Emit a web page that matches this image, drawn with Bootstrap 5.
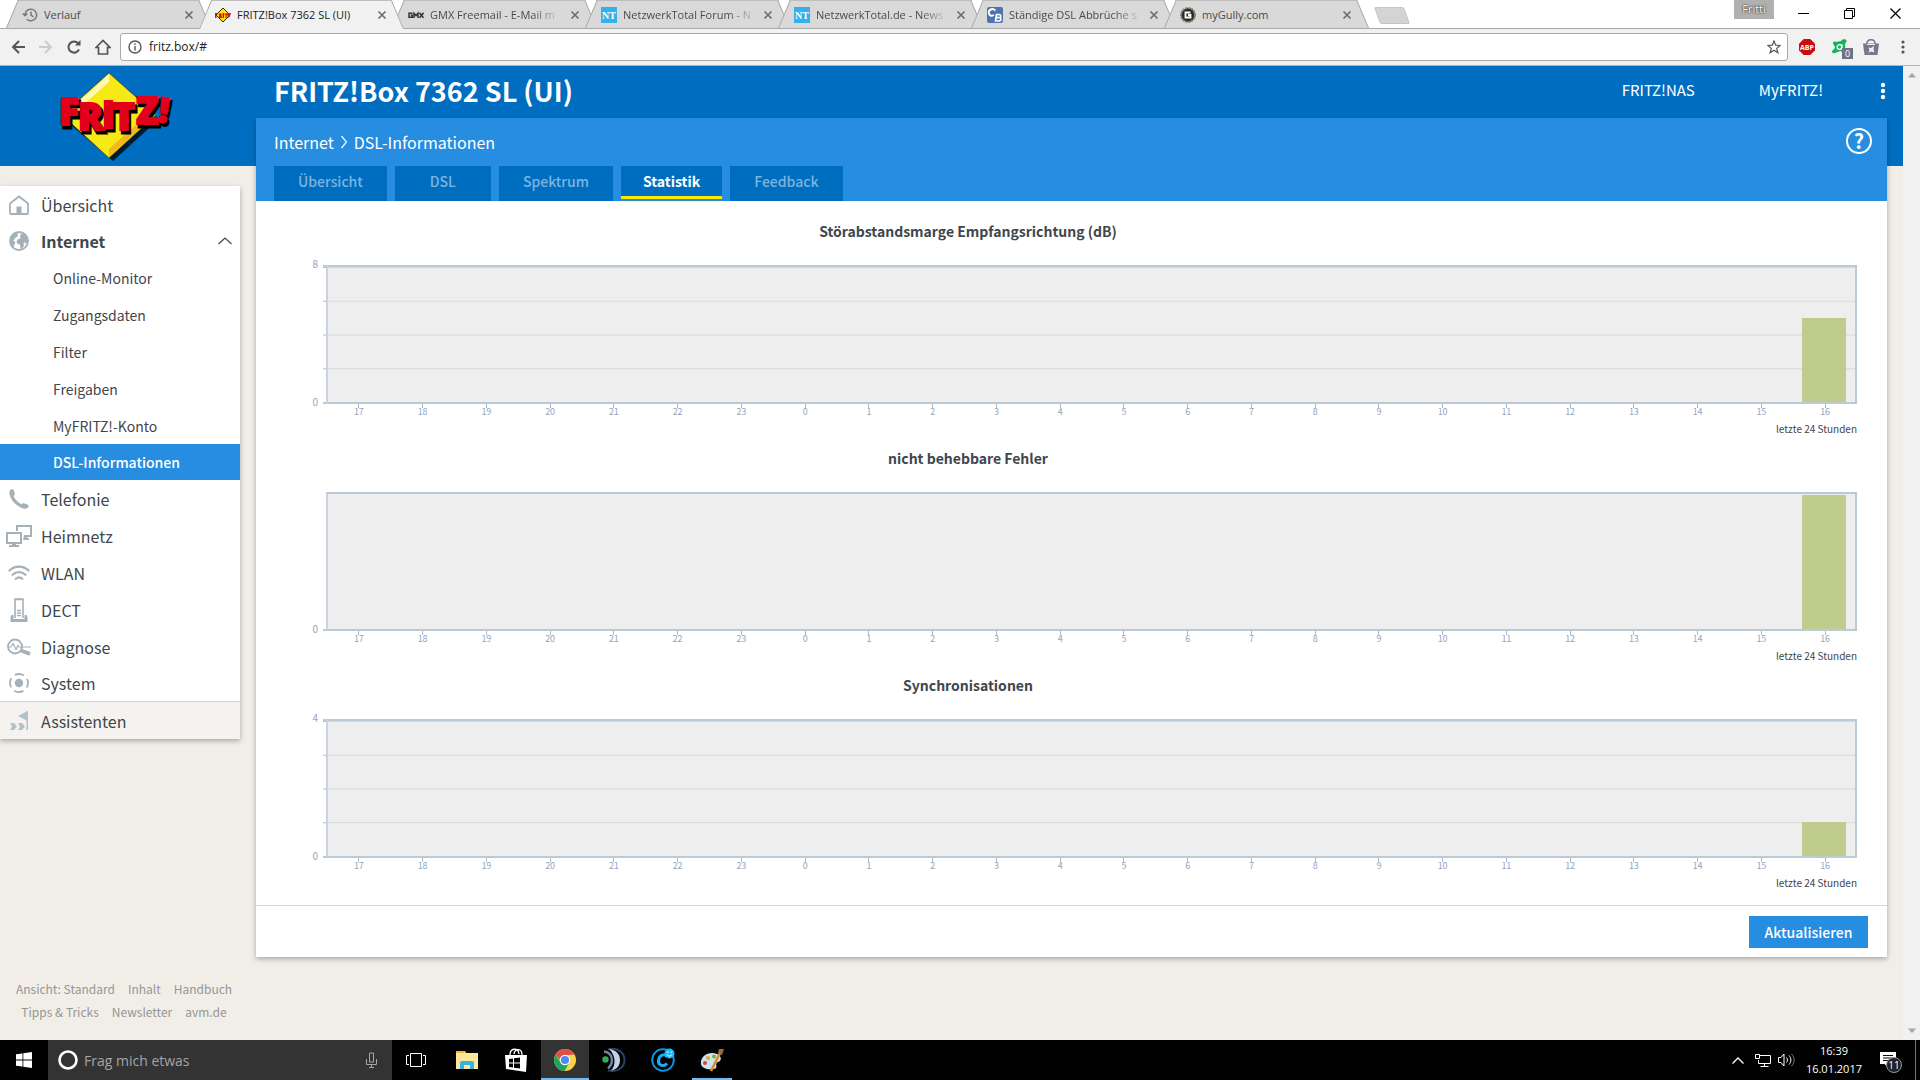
<!DOCTYPE html>
<html lang="de">
<head>
<meta charset="utf-8">
<meta name="viewport" content="width=device-width, initial-scale=1">
<title>FRITZ!Box 7362 SL (UI)</title>
<link href="https://cdn.jsdelivr.net/npm/bootstrap@5.3.0/dist/css/bootstrap.min.css" rel="stylesheet">
<style>
:root { --fb-dark:#006ec0; --fb-light:#268de0; --fb-ink:#3f464c; --fb-icon:#a5b1b9; --ui:"Open Sans","Noto Sans",sans-serif; }
body { font-family:"Noto Sans CJK SC","Source Sans Pro",sans-serif; color:var(--fb-ink); background:#f1eee7; }
a { text-decoration:none; color:inherit; }
button { border:0; background:none; padding:0; color:inherit; }
svg { display:block; flex:none; }

/* browser window */
.browser { font-family:var(--ui); font-size:12px; background:#f1f1f1; }
.tabstrip { height:29px; background:#fff; padding-left:6px; border-bottom:1px solid #a9a9a9; }
.btab { position:relative; width:205px; height:28px; margin-right:-12px; padding:1px 17px 0 16px; gap:6px; color:#4b4b4b; font-size:11px; line-height:28px; }
.btab::before, .btab::after { content:""; position:absolute; top:0; bottom:0; width:52%; background:#d9d9d9; border-top:1px solid #bdbdbd; }
.btab::before { left:0; transform:skewX(-23deg); transform-origin:left bottom; border-left:1px solid #a9a9a9; }
.btab::after { right:0; transform:skewX(23deg); transform-origin:right bottom; border-right:1px solid #a9a9a9; }
.btab > * { position:relative; z-index:1; }
.btab.current { z-index:3; height:29px; color:#222; }
.btab.current::before, .btab.current::after { background:#f1f1f1; }
.btab-title { white-space:nowrap; }
.btab-title.fades { -webkit-mask-image:linear-gradient(90deg,#000 82%,rgba(0,0,0,.2)); }
.new-tab { width:30px; height:17px; margin:7px 0 0 20px; background:#d4d4d4; border:1px solid #c4c4c4; border-radius:2px; transform:skewX(20deg); }
.user-chip { width:40px; height:19px; background:#b0b0b0; color:#fff; font-size:11px; line-height:18px; text-shadow:0 0 2px #222,0 0 1px #222; }
.winbtns { gap:35px; padding:8px 19px 0 24px; }
.toolbar { height:36px; padding:0 13px 0 11px; gap:14px; }
.omnibox { height:28px; border:1px solid #a9a9a9; border-radius:3px; background:#fff; padding:0 6px 0 7px; gap:7px; margin:0 -3px 0 -5px; }
.omnibox input { border:0; outline:0; padding:0; font-size:12px; color:#222; background:none; }
.browser-edge { height:1px; background:#b3b3b3; }
.ext-badge { position:absolute; left:11px; top:9px; width:11px; height:11px; background:#6f7285; color:#fff; font-size:9px; line-height:11px; text-align:center; }

/* router page */
.fb-page { background:linear-gradient(var(--fb-dark) 100px,#f1eee7 100px); }
.fb-left { width:248px; }
.fb-logo { height:120px; padding:6px 0 0 58px; }
.fb-menu { width:240px; background:#fff; box-shadow:0 2px 5px rgba(0,0,0,.3); font-size:16px; }
.fb-menu a { display:flex; align-items:center; height:37px; line-height:24px; }
.fb-menu .ico { width:38px; margin-right:3px; display:flex; justify-content:center; color:var(--fb-icon); }
.fb-menu .group { height:36px; }
.fb-menu .sub { font-size:14px; padding-left:53px; }
.fb-menu .sub.here { background:var(--fb-light); color:#fff; font-weight:500; height:36px; }
.fb-menu .wizard { background:#f5f3ef; border-top:1px solid #cfd1d2; height:38px; }
.fb-links { color:#969694; font-size:12px; line-height:23px; padding:0 0 17px 0; }
.fb-links div { gap:13px; }
.fb-top { height:52px; color:#fff; padding:0 0 3px 18px; }
.fb-title { font-size:27px; font-weight:700; line-height:36px; margin:0; }
.fb-nav { font-size:15px; gap:56px; }
.fb-panel { background:#fff; margin-right:16px; box-shadow:0 2px 5px rgba(0,0,0,.3); }
.fb-head { background:var(--fb-light); height:83px; color:#fff; padding:0 18px; }
.crumbs { font-size:16px; line-height:24px; padding-top:12px; gap:7px; }
.help { width:26px; height:26px; border:2px solid #fff; border-radius:50%; font-size:20px; font-weight:700; line-height:20px; margin:10px -3px 0 0; }
.fb-tabs { gap:8px; }
.fb-tabs a { background:var(--fb-dark); color:#7db4de; font-size:14px; font-weight:500; line-height:30px; height:35px; padding:0 24px; min-width:96px; text-align:center; }
.fb-tabs a.here { color:#fff; font-weight:700; height:33px; padding:0 22px; border-bottom:3px solid #ffe600; }
.charts { padding:18px 30px 5px 0; }
.chart { margin:0 0 8px; }
.chart-title { font-size:14px; font-weight:700; line-height:24px; margin:0 177px 22px 0; text-align:center; color:#3f464c; }
.y-labels { width:62px; margin:-7px 5px -4px 0; font-size:10px; line-height:12px; color:#93a5bc; text-align:right; }
.ticks { width:3px; }
.plot, .ticks { height:139px; border:solid #bccad6; border-width:2px 0; }
.plot { border-width:2px; border-left-color:#c9d4de; background-color:#eee; padding-right:9px; }
.lined { background-image:linear-gradient(#d0dae3 1px,transparent 1px); background-size:100% 25%; }
.ticks.lined { background-image:linear-gradient(#aebdcb 1px,transparent 1px); }
.ticks.single { border-top-color:transparent; }
.bar { width:44px; background:#c0cb8e; }
.x-labels { margin-left:71px; font-size:9px; line-height:16px; color:#93a5bc; }
.x-labels span { flex:1 1 0; text-align:center; background:linear-gradient(#a9b9c9,#a9b9c9) center top/1px 4px no-repeat; }
.chart-note { font-size:10px; line-height:18px; text-align:right; }
.fb-actions { border-top:1px solid #d3d5d6; padding:10px 19px 9px; }
.fb-btn { background:var(--fb-light); color:#fff; font-size:14px; font-weight:500; width:119px; height:32px; line-height:32px; border-radius:0; }
.scroller { width:17px; background:#f1f1f1; padding:7px 0; }

/* taskbar */
.taskbar { height:40px; background:#020203; color:#fff; font-family:var(--ui); }
.tb { width:48px; height:40px; display:flex; align-items:center; justify-content:center; }
.tb.live { background:#333; }
.tb.live, .tb.open { box-shadow:inset 0 -2px #76b9ed; }
.tb.open { width:40px; margin:0 4px; }
.cortana { width:344px; background:#333; padding:0 15px 0 10px; gap:6px; }
.cortana input { background:none; border:0; outline:0; padding:0; color:#a5a5a5; font-size:14px; }
.cortana input::placeholder { color:#a5a5a5; opacity:1; }
.apps { gap:1px; margin-left:3px; }
.tray { gap:7px; font-size:11px; line-height:18px; }
.news { position:relative; margin-left:11px; }
.news-count { position:absolute; left:6px; top:5px; width:16px; height:16px; border-radius:50%; background:#222; border:1px solid #999; font-size:10px; line-height:14px; text-align:center; }
.peek { width:1px; height:40px; background:#777; margin:0 4px 0 12px; }
</style>
<script src="https://cdn.jsdelivr.net/npm/bootstrap@5.3.0/dist/js/bootstrap.bundle.min.js"></script>
</head>
<body class="d-flex flex-column min-vh-100">

<svg width="0" height="0" class="position-absolute" aria-hidden="true">
  <symbol id="x" viewBox="0 0 10 10"><path d="M1.500 1.500l7 7m0-7l-7 7" stroke="#6a6a6a" stroke-width="1.600"/></symbol>
</svg>

<header class="browser">
  <div class="tabstrip d-flex align-items-start">
    <div class="btab d-flex align-items-center">
      <svg width="16" height="16" viewBox="0 0 16 16" fill="none" stroke="#777" stroke-width="1.500"><path d="M3 8a5.800 5.800 0 1 1 1.800 4.200M.8 6.500L3 8.800l2.300-2.300M9 4.500V8l2.500 1.800"/></svg>
      <span class="btab-title">Verlauf</span>
      <button type="button" class="ms-auto" aria-label="Tab schließen"><svg width="10" height="10"><use href="#x"/></svg></button>
    </div>
    <div class="btab current d-flex align-items-center">
      <svg width="16" height="16" viewBox="0 0 16 16"><path d="M8 1l7 7-7 7-7-7z" fill="#ffe800" stroke="#332b00"/><path d="M0 6h3v1.500H1.500V11H0zM4 6.500h2.500v2L7 11H4zM7.500 6H9v5H7.500zM9.500 6.500h3V8h-.8v3h-1.200V8h-1zM12.500 6H16l-1.500 4.500h-2z" fill="#d8101c"/></svg>
      <span class="btab-title">FRITZ!Box 7362 SL (UI)</span>
      <button type="button" class="ms-auto" aria-label="Tab schließen"><svg width="10" height="10"><use href="#x"/></svg></button>
    </div>
    <div class="btab d-flex align-items-center">
      <svg width="16" height="16" viewBox="0 0 16 16" fill="none" stroke="#333" stroke-width="1.500"><path d="M4.500 6.200H1v4h3.300V8.300H2.800M6 11V6.200l2 2.300 2-2.300V11M11.500 5.800l4 5M15.500 5.800l-4 5"/></svg>
      <span class="btab-title fades">GMX Freemail - E-Mail m</span>
      <button type="button" class="ms-auto" aria-label="Tab schließen"><svg width="10" height="10"><use href="#x"/></svg></button>
    </div>
    <div class="btab d-flex align-items-center">
      <svg width="16" height="16" viewBox="0 0 16 16"><path d="M0 0h16v16H0z" fill="#36b0ea"/><text x="8" y="12" font-size="10" font-weight="700" font-family="Liberation Serif,serif" fill="#fff" text-anchor="middle">NT</text></svg>
      <span class="btab-title fades">NetzwerkTotal Forum - N</span>
      <button type="button" class="ms-auto" aria-label="Tab schließen"><svg width="10" height="10"><use href="#x"/></svg></button>
    </div>
    <div class="btab d-flex align-items-center">
      <svg width="16" height="16" viewBox="0 0 16 16"><path d="M0 0h16v16H0z" fill="#36b0ea"/><text x="8" y="12" font-size="10" font-weight="700" font-family="Liberation Serif,serif" fill="#fff" text-anchor="middle">NT</text></svg>
      <span class="btab-title fades">NetzwerkTotal.de - News</span>
      <button type="button" class="ms-auto" aria-label="Tab schließen"><svg width="10" height="10"><use href="#x"/></svg></button>
    </div>
    <div class="btab d-flex align-items-center">
      <svg width="16" height="16" viewBox="0 0 16 16"><rect width="16" height="16" rx="2" fill="#4d74b0"/><path d="M8.500 3.500C5 .5 1.500 3 1.800 6c.2 2.500 2.500 3.500 5 2" fill="none" stroke="#fff" stroke-width="2"/><path d="M9.500 7.500l-1 6.500h3c3 0 3-3.200.8-3.400 2.200-.4 2-3.100-.3-3.100zM9 10.600h3" fill="none" stroke="#fff" stroke-width="1.700"/></svg>
      <span class="btab-title fades">Ständige DSL Abbrüche s</span>
      <button type="button" class="ms-auto" aria-label="Tab schließen"><svg width="10" height="10"><use href="#x"/></svg></button>
    </div>
    <div class="btab d-flex align-items-center">
      <svg width="16" height="16" viewBox="0 0 16 16"><circle cx="8" cy="8" r="7" fill="#2b2b27" stroke="#8b8170" stroke-width="2" stroke-dasharray="2 1"/><path d="M10.500 5.500h-5v5h5V8H8" fill="none" stroke="#fff" stroke-width="1.800"/></svg>
      <span class="btab-title">myGully.com</span>
      <button type="button" class="ms-auto" aria-label="Tab schließen"><svg width="10" height="10"><use href="#x"/></svg></button>
    </div>
    <button type="button" class="new-tab" aria-label="Neuer Tab"></button>
    <div class="ms-auto d-flex">
      <div class="user-chip text-center">Fritti</div>
      <div class="winbtns d-flex">
        <button type="button" aria-label="Minimieren"><svg width="11" height="11" stroke="#000"><path d="M0 5.500h11"/></svg></button>
        <button type="button" aria-label="Wiederherstellen"><svg width="11" height="11" fill="none" stroke="#000"><path d="M.5 2.500h8v8h-8zM2.500 2.500v-2h8v8h-2"/></svg></button>
        <button type="button" aria-label="Schließen"><svg width="11" height="11" stroke="#000" stroke-width="1.200"><path d="M.5.5l10 10m0-10l-10 10"/></svg></button>
      </div>
    </div>
  </div>
  <div class="toolbar d-flex align-items-center">
    <button type="button" aria-label="Zurück"><svg width="14" height="14" fill="none" stroke="#555" stroke-width="2"><path d="M14 7H2m6-6L2 7l6 6"/></svg></button>
    <button type="button" aria-label="Vor"><svg width="14" height="14" fill="none" stroke="#ccc" stroke-width="2"><path d="M0 7h12M6 1l6 6-6 6"/></svg></button>
    <button type="button" aria-label="Neu laden"><svg width="14" height="14" fill="none" stroke="#555" stroke-width="2"><path d="M12 9.500a5.500 5.500 0 1 1-.8-6"/><path d="M13.500 0v5.500H8z" fill="#555" stroke="none"/></svg></button>
    <button type="button" aria-label="Startseite"><svg width="16" height="16" fill="none" stroke="#555" stroke-width="1.700"><path d="M1 8.500L8 1.500l7 7h-2.500V15h-9V8.500z"/></svg></button>
    <div class="omnibox d-flex align-items-center flex-fill">
      <svg width="14" height="14" fill="none" stroke="#555" stroke-width="1.400"><circle cx="7" cy="7" r="6"/><path d="M7 6v4.500M7 3.300v1.500"/></svg>
      <input class="flex-fill" type="text" aria-label="Adresse" value="fritz.box/#">
      <svg width="14" height="14" viewBox="0 0 14 14" fill="none" stroke="#555" stroke-width="1.200"><path d="M7 1l1.700 4.200 4.500.3-3.500 2.900 1.200 4.400L7 10.300l-3.900 2.500 1.200-4.400L.8 5.500l4.500-.3z"/></svg>
    </div>
    <div class="d-flex align-items-center gap-3">
      <svg width="16" height="16"><path d="M4.700 0h6.600L16 4.700v6.600L11.300 16H4.700L0 11.300V4.700z" fill="#c90c0f"/><text x="8" y="11" font-size="7" font-weight="700" font-family="Open Sans,sans-serif" fill="#fff" text-anchor="middle">ABP</text></svg>
      <div class="position-relative"><svg width="16" height="16"><path d="M2 4c0-1.500 2-2 3.500-1L10 2c1-2 5-2.500 5.500-.5.500 1.500-1 2.500-1.500 3.500l.5 8c-1.500 1.500-3.500 0-5-1L4 14c-2 .8-4-.5-2.500-2.500L4 9c0-2-2-3.500-2-5z" fill="#12b457"/><circle cx="8.500" cy="8" r="2.300" fill="none" stroke="#fff" stroke-width="1.300"/><path d="M11 5v6" stroke="#fff"/></svg><span class="ext-badge">0</span></div>
      <svg width="16" height="16"><path d="M0 4.500h16L14.500 16h-13z" fill="#75798a"/><path d="M4 6V4a4 3.300 0 0 1 8 0v2" fill="none" stroke="#75798a" stroke-width="1.500"/><path d="M4 5.500h8" stroke="#f1f1f1"/><path d="M5.500 8.500l2.500.5 3-2-.5 3 .8 3.500-2.800-1-3 1 1-2.500z" fill="#f1f1f1"/></svg>
      <button type="button" aria-label="Menü" class="ms-1"><svg width="8" height="16" fill="#555"><circle cx="4" cy="3" r="1.600"/><circle cx="4" cy="8" r="1.600"/><circle cx="4" cy="13" r="1.600"/></svg></button>
    </div>
  </div>
  <div class="browser-edge"></div>
</header>

<div class="d-flex flex-fill">
  <div class="fb-page d-flex flex-fill">
    <aside class="fb-left d-flex flex-column flex-shrink-0">
      <a class="fb-logo" href="#" aria-label="FRITZ!">
        <svg width="116" height="90" viewBox="0 0 116 90">
          <path d="M53 5l48 42-46 42L6 47z" fill="#000" opacity=".75"/>
          <path d="M51 1l47 42-47 43L4 43z" fill="#f7ea14" stroke="#3a3600" stroke-width=".6"/>
          <path d="M51 2v8L14 43H6z" fill="#fffab0"/><path d="M51 85v-8l38-34h8z" fill="#f2b71b"/>
          <g font-family="Open Sans,sans-serif" font-weight="800" font-size="37">
            <g fill="#000" stroke="#000" stroke-width="3"><text x="3" y="56">F</text><text x="22" y="61">R</text><text x="46" y="59">I</text><text x="57" y="61">T</text><text x="80" y="55">Z</text><text x="103" y="53" font-size="34" transform="rotate(8 108 40)">!</text></g>
            <g fill="#e2001a" stroke="#e2001a" stroke-width="2"><text x="1" y="53">F</text><text x="20" y="58">R</text><text x="44" y="56">I</text><text x="55" y="58">T</text><text x="78" y="52">Z</text><text x="101" y="50" font-size="34" transform="rotate(8 106 38)">!</text></g>
          </g>
        </svg>
      </a>
      <nav class="fb-menu">
        <a href="#"><span class="ico"><svg width="20" height="20" viewBox="0 0 20 20" fill="none" stroke="currentColor" stroke-width="1.800"><path d="M1 8.500L10 1.500l9 7V18a1 1 0 0 1-1 1H2a1 1 0 0 1-1-1z"/><path d="M7.500 11.500h5V19h-5z" fill="currentColor" stroke="none"/></svg></span>Übersicht</a>
        <a href="#" class="group fw-bold"><span class="ico"><svg width="20" height="20" viewBox="0 0 20 20" fill="currentColor"><circle cx="10" cy="10" r="9" fill="none" stroke="currentColor" stroke-width="1.800"/><path d="M1.500 7l3-4 3-1.500 2 1L8 4l1.500.5L7 6.500 5 8l.5 1L4 9.500 6.500 11l-1 2.500-.8 3L2 13z"/><path d="M11.500 3.500l2.500-2 4 4L19 10l-2.500 3-1-2-1 1.500.5 2-2 3.500-1.500-.5-.5-4-2.500-.5-1-2.500L9 8l2.500-.5-.5-2z"/></svg></span>Internet
          <svg class="ms-auto me-2" width="14" height="8" fill="none" stroke="#3f464c" stroke-width="1.200"><path d="M.5 7L7 1l6.500 6"/></svg></a>
        <a href="#" class="sub">Online-Monitor</a>
        <a href="#" class="sub">Zugangsdaten</a>
        <a href="#" class="sub">Filter</a>
        <a href="#" class="sub">Freigaben</a>
        <a href="#" class="sub">MyFRITZ!-Konto</a>
        <a href="#" class="sub here">DSL-Informationen</a>
        <a href="#"><span class="ico"><svg width="20" height="20" viewBox="0 0 20 20" fill="currentColor"><path d="M1 1c2-1.500 3.500-.8 4 .8l.8 3C6 6 5.500 6.300 4.500 7c1.500 3.500 4.500 6.500 8 8.300.8-1 1.300-1.300 2.500-1l3.500 1.200c1.500.8 1.500 2 .3 3.300-1.600 1.500-4.300 1.200-7-.3C6.300 15.700 2.600 11.700 1 7 .3 4.500 0 2.300 1 1z"/></svg></span>Telefonie</a>
        <a href="#"><span class="ico"><svg width="26" height="22" viewBox="0 0 26 22" fill="none" stroke="currentColor" stroke-width="2"><path d="M11 6V1h14v10h-7"/><path d="M1 8h14v10H1z"/><path d="M6 18h4v2h3v2H3v-2h3zM18 11h3v2h2v2h-6z" fill="currentColor" stroke="none"/></svg></span>Heimnetz</a>
        <a href="#"><span class="ico"><svg width="22" height="16" viewBox="0 0 22 16" fill="none" stroke="currentColor" stroke-width="2.200" stroke-linecap="round"><path d="M1.500 5.500c5-5.300 14-5.300 19 0M4.500 9.800c4-3.700 9-3.700 13 0M7.800 13.800c2-1.800 4.400-1.800 6.400 0"/></svg></span>WLAN</a>
        <a href="#"><span class="ico"><svg width="18" height="24" viewBox="0 0 18 24" fill="none" stroke="currentColor" stroke-width="1.600"><path d="M5 20V1h8v19M5 1.500h8M7 12.500h4M7 15h4M7 17.500h4"/><path d="M.5 24v-5l1-2h2v4h11v-4h2l1 2v5z" fill="currentColor" stroke="none"/></svg></span>DECT</a>
        <a href="#"><span class="ico"><svg width="24" height="18" viewBox="0 0 24 18" fill="none" stroke="currentColor" stroke-width="1.800"><circle cx="8" cy="8.500" r="7"/><path d="M1 9h3l2-3.500 3 6 2-4 1 1.500h3" stroke-width="1.200"/><path d="M15 9h9" stroke-width="1"/><path d="M14 12.500l9 3.500" stroke-width="3.500"/></svg></span>Diagnose</a>
        <a href="#" class="group"><span class="ico"><svg width="20" height="20" viewBox="0 0 20 20"><circle cx="10" cy="10" r="9" fill="none" stroke="currentColor" stroke-width="1.800" stroke-dasharray="9.500 4.640" stroke-dashoffset="4.700"/><circle cx="10" cy="10" r="4.200" fill="currentColor"/></svg></span>System</a>
        <a href="#" class="wizard"><span class="ico"><svg width="20" height="19" viewBox="0 0 20 19" fill="#b3c1c8"><path d="M17.500 0H19v19h-1.500zM9 5l8.500-4.500v9zM1 12h4l3 3.500L5 19H1l2-3.500zM9 12h4l3 3.500-3 3.500H9l2-3.500z"/></svg></span>Assistenten</a>
      </nav>
      <footer class="fb-links mt-auto">
        <div class="d-flex justify-content-center"><a href="#">Ansicht: Standard</a><a href="#">Inhalt</a><a href="#">Handbuch</a></div>
        <div class="d-flex justify-content-center"><a href="#">Tipps &amp; Tricks</a><a href="#">Newsletter</a><a href="#">avm.de</a></div>
      </footer>
    </aside>

    <div class="flex-fill ms-2">
      <div class="fb-top d-flex align-items-center justify-content-between">
        <h1 class="fb-title">FRITZ!Box 7362 SL (UI)</h1>
        <nav class="fb-nav d-flex align-items-center me-3">
          <a href="#" class="me-2">FRITZ!NAS</a><a href="#">MyFRITZ!</a>
          <button type="button" aria-label="Weitere Optionen"><svg width="8" height="18" fill="#fff"><circle cx="4" cy="3" r="2.200"/><circle cx="4" cy="9" r="2.200"/><circle cx="4" cy="15" r="2.200"/></svg></button>
        </nav>
      </div>
      <main class="fb-panel">
        <div class="fb-head d-flex flex-column justify-content-between">
          <div class="d-flex justify-content-between align-items-start">
            <div class="crumbs d-flex align-items-center"><a href="#">Internet</a><svg width="6" height="14" fill="none" stroke="#fff" stroke-width="1.200"><path d="M.5 1l5 6-5 6"/></svg><span>DSL-Informationen</span></div>
            <button type="button" class="help" aria-label="Hilfe">?</button>
          </div>
          <nav class="fb-tabs d-flex align-items-start">
            <a href="#">Übersicht</a><a href="#">DSL</a><a href="#">Spektrum</a><a href="#" class="here">Statistik</a><a href="#">Feedback</a>
          </nav>
        </div>
        <div class="charts">
          <figure class="chart">
            <h2 class="chart-title">Störabstandsmarge Empfangsrichtung (dB)</h2>
            <div class="d-flex">
              <div class="y-labels d-flex flex-column justify-content-between"><span>8</span><span>0</span></div>
              <div class="ticks lined"></div>
              <div class="plot lined flex-fill d-flex align-items-end justify-content-end"><div class="bar" style="height:62.5%"></div></div>
            </div>
            <div class="x-labels d-flex"><span>17</span><span>18</span><span>19</span><span>20</span><span>21</span><span>22</span><span>23</span><span>0</span><span>1</span><span>2</span><span>3</span><span>4</span><span>5</span><span>6</span><span>7</span><span>8</span><span>9</span><span>10</span><span>11</span><span>12</span><span>13</span><span>14</span><span>15</span><span>16</span></div>
            <figcaption class="chart-note">letzte 24 Stunden</figcaption>
          </figure>
          <figure class="chart">
            <h2 class="chart-title">nicht behebbare Fehler</h2>
            <div class="d-flex">
              <div class="y-labels d-flex flex-column justify-content-end"><span>0</span></div>
              <div class="ticks single"></div>
              <div class="plot flex-fill d-flex align-items-end justify-content-end"><div class="bar" style="height:99%"></div></div>
            </div>
            <div class="x-labels d-flex"><span>17</span><span>18</span><span>19</span><span>20</span><span>21</span><span>22</span><span>23</span><span>0</span><span>1</span><span>2</span><span>3</span><span>4</span><span>5</span><span>6</span><span>7</span><span>8</span><span>9</span><span>10</span><span>11</span><span>12</span><span>13</span><span>14</span><span>15</span><span>16</span></div>
            <figcaption class="chart-note">letzte 24 Stunden</figcaption>
          </figure>
          <figure class="chart">
            <h2 class="chart-title">Synchronisationen</h2>
            <div class="d-flex">
              <div class="y-labels d-flex flex-column justify-content-between"><span>4</span><span>0</span></div>
              <div class="ticks lined"></div>
              <div class="plot lined flex-fill d-flex align-items-end justify-content-end"><div class="bar" style="height:25%"></div></div>
            </div>
            <div class="x-labels d-flex"><span>17</span><span>18</span><span>19</span><span>20</span><span>21</span><span>22</span><span>23</span><span>0</span><span>1</span><span>2</span><span>3</span><span>4</span><span>5</span><span>6</span><span>7</span><span>8</span><span>9</span><span>10</span><span>11</span><span>12</span><span>13</span><span>14</span><span>15</span><span>16</span></div>
            <figcaption class="chart-note">letzte 24 Stunden</figcaption>
          </figure>
        </div>
        <div class="fb-actions d-flex justify-content-end"><button type="submit" class="fb-btn">Aktualisieren</button></div>
      </main>
    </div>
  </div>
  <div class="scroller d-flex flex-column justify-content-between align-items-center" aria-hidden="true">
    <svg width="8" height="5" fill="#a3a3a3"><path d="M0 4.500L4 0l4 4.500z"/></svg>
    <svg width="8" height="5" fill="#a3a3a3"><path d="M0 .5L4 5l4-4.500z"/></svg>
  </div>
</div>

<footer class="taskbar d-flex">
  <button type="button" class="tb" aria-label="Start"><svg width="16" height="16" fill="#fff"><path d="M0 2.300L6.500 1.400v6.200H0zM7.300 1.300L16 0v7.600H7.300zM0 8.400h6.500v6.200L0 13.700zM7.300 8.400H16V16l-8.700-1.300z"/></svg></button>
  <div class="cortana d-flex align-items-center">
    <svg width="20" height="20" fill="none"><circle cx="10" cy="10" r="8.500" stroke="#fff" stroke-width="2.600"/></svg>
    <input class="flex-fill" type="text" aria-label="Suche" placeholder="Frag mich etwas">
    <svg width="11" height="16" fill="none" stroke="#a5a5a5"><path d="M3.500 1h4v9h-4zM.5 7v5.500h10V7M5.500 12.500v3M3 15.500h5"/></svg>
  </div>
  <button type="button" class="tb" aria-label="Aktive Anwendungen"><svg width="20" height="14" fill="none" stroke="#fff"><path d="M4.500.5h11v13h-11zM3 2.500H.5v9H3M17 2.500h2.500v9H17"/></svg></button>
  <div class="apps d-flex">
    <button type="button" class="tb" aria-label="Explorer"><svg width="22" height="18"><path d="M0 0h9l1 2h12v16H0z" fill="#ffe79a"/><path d="M0 0h9l1 2H0z" fill="#f2bb2e"/><path d="M4 18v-6a2 2 0 0 1 2-2h10a2 2 0 0 1 2 2v6h-4v-4H8v4z" fill="#37b1e6"/></svg></button>
    <button type="button" class="tb" aria-label="Store"><svg width="22" height="24"><path d="M0 7l22 0-1 17L1 21z" fill="#fff"/><path d="M5 7c0-7 8-8 9-1M9 6c1-6 8-6 8 1" fill="none" stroke="#fff" stroke-width="1.300"/><path d="M4 11l4-.6v4H4zM9 10.300l6-.7v5H9zM4 15.500h4v4l-4-.5zM9 15.500h6v5l-6-.8z" fill="#000"/></svg></button>
    <button type="button" class="tb live" aria-label="Chrome"><svg width="22" height="22" viewBox="0 0 22 22"><circle cx="11" cy="11" r="11" fill="#fdd249"/><path d="M1.500 5.500A11 11 0 0 1 20.500 5.500L11 6.200 6 11z" fill="#df5044"/><path d="M1.500 5.500A11 11 0 0 0 10.500 22L15.500 13.500 11 16 6.500 13.500z" fill="#1da362"/><circle cx="11" cy="11" r="5.200" fill="#fff"/><circle cx="11" cy="11" r="4.100" fill="#4a8af5"/></svg></button>
    <button type="button" class="tb" aria-label="TeamSpeak"><svg width="24" height="24" fill="none"><path d="M6 1.500C15-1 22.500 4 22.500 12S15 24.500 6 22.500" stroke="#2c4261" stroke-width="2"/><path d="M7 1c8 1 11 6 11 11S15 22 9 22.500c5-5 5-15-2-21.500z" fill="#c3d2e3"/><path d="M2 3.500c8 1 11 10 4 17" stroke="#7184a0" stroke-width="2.400"/><circle cx="3.500" cy="11.500" r="3.200" fill="#2fae54"/></svg></button>
    <button type="button" class="tb" aria-label="Cliqz"><svg width="24" height="24" fill="none"><circle cx="12" cy="12" r="10.800" stroke="#0b9be8" stroke-width="1.800"/><path d="M16 9c-2-4-8-2-8.500 3.500S13 19 16 15.500" stroke="#13aef8" stroke-width="3"/><circle cx="18.500" cy="5.500" r="5" fill="#17b8ff"/><path d="M16 6.500c1 2 4 2 5 0M16.800 3.500v1.500M20.200 3.500v1.500" stroke="#fff"/></svg></button>
    <button type="button" class="tb open" aria-label="Paint"><svg width="24" height="24"><path d="M1 16C0 8 9 3 17 6c5 2 5 7 1 8s1 6-4 7C7 22 1.500 20 1 16z" fill="#c9e4f2"/><circle cx="5" cy="15" r="2" fill="#d9432f"/><circle cx="8" cy="10" r="2" fill="#f0a02c"/><circle cx="14" cy="8.500" r="2" fill="#6bb83a"/><path d="M11 23l9-18" stroke="#e08a33" stroke-width="2.600"/><path d="M18 5l1-4 5 0-2 6z" fill="#9b6b43"/></svg></button>
  </div>
  <div class="tray d-flex align-items-center ms-auto">
    <svg width="12" height="7" fill="none" stroke="#fff" stroke-width="1.300"><path d="M.5 6.500L6 1l5.500 5.500"/></svg>
    <svg class="ms-1" width="16" height="13" fill="none" stroke="#fff"><path d="M5 1.500h10.500v8H3.500V6M.5.500h4v4h-4zM9.500 10v2.500M5.500 12.500h8"/></svg>
    <svg width="17" height="14" fill="none" stroke="#fff"><path d="M.5 4.500H3l3-3.500v12L3 9.500H.5zM8.500 4.500c1.300 1.500 1.300 3.500 0 5M11 2.500c2.500 2.700 2.500 6.300 0 9"/><path d="M13.500 1c3.500 3.500 3.500 8.500 0 12" stroke="#777"/></svg>
    <div class="text-center ms-1">16:39<br>16.01.2017</div>
    <div class="news"><svg width="16" height="16"><path d="M0 0h16v12H8v3.500L4.500 12H0z" fill="#fff"/><path d="M3 3.500h10M3 6h10M3 8.500h7" stroke="#000"/></svg><span class="news-count">11</span></div>
    <div class="peek"></div>
  </div>
</footer>
</body>
</html>
